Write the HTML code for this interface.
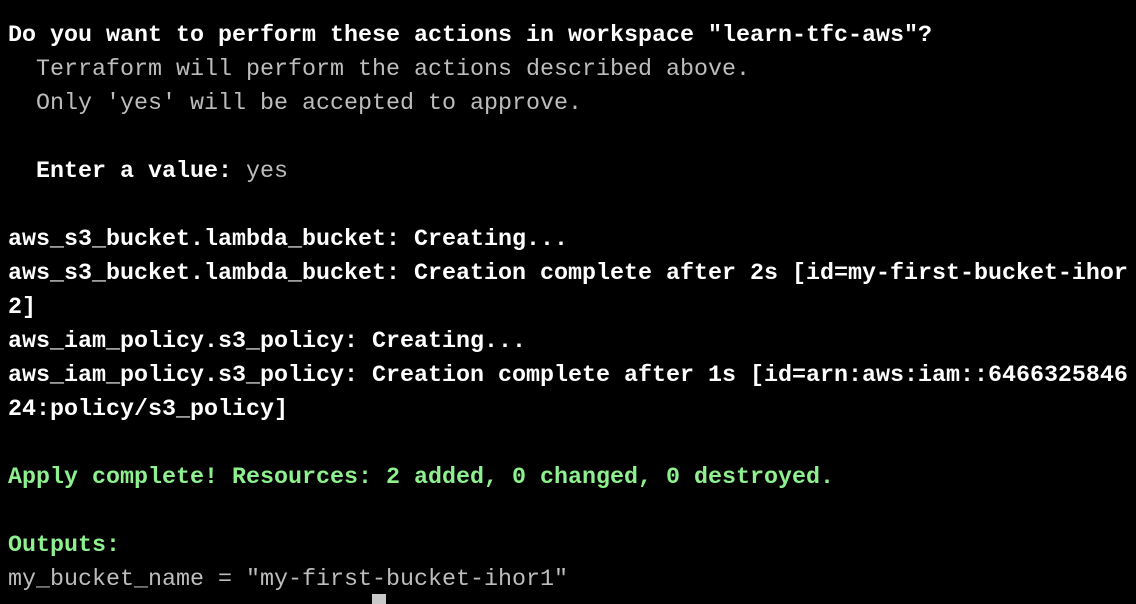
<!DOCTYPE html><html><head><style>
html,body{margin:0;padding:0;background:#000;width:1136px;height:600px;overflow:hidden}
pre{margin:0;position:absolute;left:8px;top:19px;font-family:"Liberation Mono",monospace;font-size:23.33px;line-height:34px;color:#fff;white-space:pre}
.b{font-weight:bold;color:#fff}.g{color:#bdbdbd}.gr{color:#8ef08e;font-weight:bold}
.cur{position:absolute;left:372px;top:594px;width:14px;height:10px;background:#c8c8c8}
</style></head><body><pre><span class="b">Do you want to perform these actions in workspace "learn-tfc-aws"?</span>
<span class="g">  Terraform will perform the actions described above.
  Only 'yes' will be accepted to approve.</span>

<span class="b">  Enter a value:</span> <span class="g">yes</span>

<span class="b">aws_s3_bucket.lambda_bucket: Creating...
aws_s3_bucket.lambda_bucket: Creation complete after 2s [id=my-first-bucket-ihor
2]
aws_iam_policy.s3_policy: Creating...
aws_iam_policy.s3_policy: Creation complete after 1s [id=arn:aws:iam::6466325846
24:policy/s3_policy]</span>

<span class="gr">Apply complete! Resources: 2 added, 0 changed, 0 destroyed.</span>

<span class="gr">Outputs:</span>
<span class="g">my_bucket_name = "my-first-bucket-ihor1"</span></pre><div class="cur"></div></body></html>
